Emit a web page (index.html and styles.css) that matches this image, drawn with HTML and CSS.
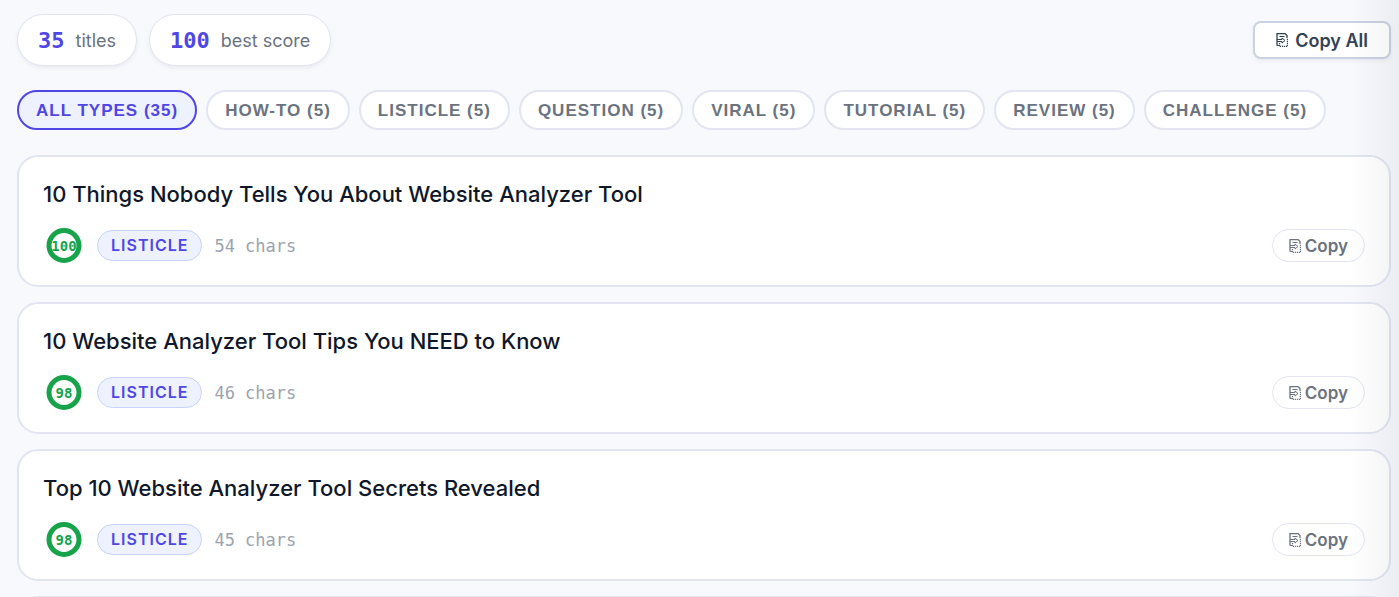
FILE: index.html
```html
<!DOCTYPE html>
<html lang="en">
<head>
<meta charset="utf-8">
<meta name="viewport" content="width=device-width, initial-scale=1">
<title>Title Generator Results</title>
<link rel="stylesheet" href="styles.css">
</head>
<body>
<svg class="defs" aria-hidden="true">
  <symbol id="copy-icon" viewBox="0 0 12 14">
    <path d="M1 12.5V.5h8l2 2V5" fill="none" stroke="currentColor" stroke-width="1.3"/>
    <path d="M1 12.5h2M3.5 3.5h5" fill="none" stroke="currentColor"/>
    <path d="M3.5 10v3.5h8V5" fill="none" stroke="currentColor" stroke-width="1.3" stroke-dasharray="1.2 .8"/>
    <path d="M1 6.5h5V5l3 2.5-3 2.5V8.5H1" fill="none" stroke="currentColor"/>
  </symbol>
</svg>
<main class="results">
  <header class="summary">
    <div class="stats">
      <div class="stat"><strong class="stat-value">35</strong><span>titles</span></div>
      <div class="stat"><strong class="stat-value">100</strong><span>best score</span></div>
    </div>
    <button class="copy-all" type="button"><svg class="icon" aria-hidden="true"><use href="#copy-icon"/></svg>Copy All</button>
  </header>
  <nav class="filters" aria-label="Title types">
    <button class="filter active" type="button">All Types (35)</button>
    <button class="filter" type="button">How-To (5)</button>
    <button class="filter" type="button">Listicle (5)</button>
    <button class="filter" type="button">Question (5)</button>
    <button class="filter" type="button">Viral (5)</button>
    <button class="filter" type="button">Tutorial (5)</button>
    <button class="filter" type="button">Review (5)</button>
    <button class="filter" type="button">Challenge (5)</button>
  </nav>
  <section class="cards">
    <article class="card">
      <h2 class="title">10 Things Nobody Tells You About Website Analyzer Tool</h2>
      <div class="meta">
        <svg class="score" viewBox="0 0 42 42"><circle cx="21" cy="21" r="15"/><text x="21" y="26">100</text></svg>
        <span class="tag">Listicle</span>
        <span class="chars">54 chars</span>
        <button class="copy" type="button"><svg class="icon" aria-hidden="true"><use href="#copy-icon"/></svg>Copy</button>
      </div>
    </article>
    <article class="card">
      <h2 class="title">10 Website Analyzer Tool Tips You NEED to Know</h2>
      <div class="meta">
        <svg class="score" viewBox="0 0 42 42"><circle cx="21" cy="21" r="15"/><text x="21" y="26">98</text></svg>
        <span class="tag">Listicle</span>
        <span class="chars">46 chars</span>
        <button class="copy" type="button"><svg class="icon" aria-hidden="true"><use href="#copy-icon"/></svg>Copy</button>
      </div>
    </article>
    <article class="card">
      <h2 class="title">Top 10 Website Analyzer Tool Secrets Revealed</h2>
      <div class="meta">
        <svg class="score" viewBox="0 0 42 42"><circle cx="21" cy="21" r="15"/><text x="21" y="26">98</text></svg>
        <span class="tag">Listicle</span>
        <span class="chars">45 chars</span>
        <button class="copy" type="button"><svg class="icon" aria-hidden="true"><use href="#copy-icon"/></svg>Copy</button>
      </div>
    </article>
    <article class="card next"></article>
  </section>
</main>
<div class="edge-shade"></div>
</body>
</html>
```
FILE: styles.css
```css
* { box-sizing: border-box; }
body {
  margin: 0;
  background: #f8f9fd;
  color: #0f172a;
  font-family: Inter, "Liberation Sans", sans-serif;
}
button { font-family: inherit; cursor: pointer; white-space: nowrap; }
.defs { position: absolute; width: 0; height: 0; }
.results { height: 100vh; overflow: hidden; padding: 14px 8px 0 17px; }
.summary { display: flex; justify-content: space-between; align-items: center; }
.stats { display: flex; gap: 12px; }
.stat {
  display: flex;
  align-items: center;
  gap: 11px;
  height: 52px;
  padding: 0 20px;
  border: 1px solid #e2e5f1;
  border-radius: 27px;
  background: #fff;
  box-shadow: 0 2px 4px rgba(15, 23, 42, .06);
  color: #6b7280;
  font-size: 18px;
}
.stat-value {
  color: #4f46e5;
  font-family: "DejaVu Sans Mono", monospace;
  font-size: 22px;
  font-weight: 700;
}
.copy-all {
  display: flex;
  align-items: center;
  gap: 7px;
  height: 38px;
  padding: 0 21px;
  border: 2px solid #cbd2e3;
  border-radius: 8px;
  background: #fff;
  box-shadow: 0 2px 4px rgba(15, 23, 42, .06);
  color: #334155;
  font-size: 18px;
  font-weight: 600;
}
.icon { width: 12px; height: 14px; flex: none; }
.filters { display: flex; flex-wrap: wrap; gap: 9px; margin: 24px 0 25px; }
.filter {
  height: 40px;
  padding: 2px 17px 0;
  border: 2px solid #e2e5f1;
  border-radius: 20px;
  background: #fff;
  color: #6b7280;
  font-family: "Liberation Sans", Arial, sans-serif;
  font-size: 17px;
  font-weight: 700;
  letter-spacing: 1px;
  text-transform: uppercase;
}
.filter.active { border-color: #4f46e5; background: #eef2ff; color: #4f46e5; }
.cards { display: grid; gap: 15px; }
.card {
  padding: 22px 24px 18px;
  border: 2px solid #e2e5f1;
  border-radius: 21px;
  background: #fff;
}
.card.next { min-height: 132px; }
.title { margin: 0 0 14px; font-size: 22px; font-weight: 550; line-height: 31px; }
.meta { display: flex; align-items: center; gap: 12px; }
.score { width: 42px; height: 43px; flex: none; }
.score circle { fill: none; stroke: #16a34a; stroke-width: 5; }
.score text {
  fill: #16a34a;
  font-family: "DejaVu Sans Mono", monospace;
  font-size: 14px;
  font-weight: 700;
  text-anchor: middle;
}
.tag {
  padding: 0 13px;
  border: 1px solid #c7d2fe;
  border-radius: 16px;
  background: #eef2ff;
  color: #4f46e5;
  font-size: 16px;
  font-weight: 600;
  letter-spacing: 1px;
  line-height: 29px;
  text-transform: uppercase;
}
.chars { color: #9ca3af; font-family: "DejaVu Sans Mono", monospace; font-size: 17px; }
.copy {
  display: flex;
  align-items: center;
  gap: 4px;
  height: 33px;
  margin-left: auto;
  padding: 0 16px;
  border: 1px solid #e2e5f1;
  border-radius: 17px;
  background: transparent;
  color: #6b7280;
  font-size: 17px;
  font-weight: 600;
}
.edge-shade {
  position: fixed;
  top: 0;
  right: 0;
  bottom: 0;
  width: 50px;
  background: linear-gradient(to right, rgba(15, 23, 42, 0), rgba(15, 23, 42, .05));
  pointer-events: none;
}
```
